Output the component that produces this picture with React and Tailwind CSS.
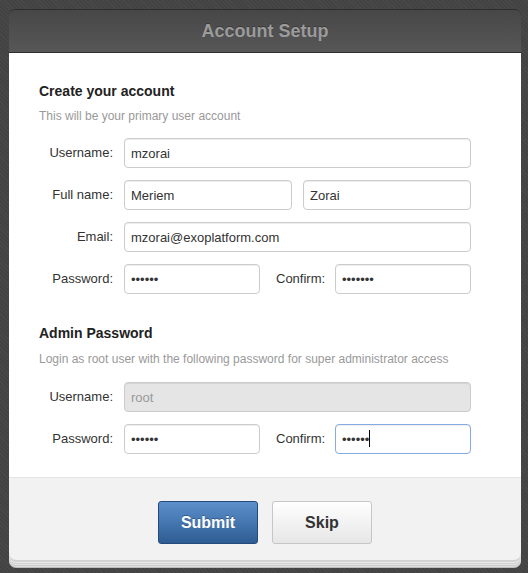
import { useState } from 'react'

const inputBase =
    'h-[30px] rounded-[4px] border px-[6px] text-[13px] outline-none shadow-[inset_0_1px_1px_rgba(0,0,0,0.075)]'
const inputNormal = `${inputBase} border-[#cccccc] bg-white text-[#333]`

function Field({ label, children }) {
    return (
        <div className="flex items-center">
            <label className="w-[75px] shrink-0 pr-[1px] text-right text-[13px] text-[#333]">{label}</label>
            <div className="ml-[10px] flex items-center">{children}</div>
        </div>
    )
}

function App() {
    const [form] = useState({
        username: 'mzorai',
        first: 'Meriem',
        last: 'Zorai',
        email: 'mzorai@exoplatform.com',
        password: '123456',
        confirm: '1234567',
        adminPassword: '123456',
        adminConfirm: '123456',
    })

    return (
        <div className="min-h-screen bg-[repeating-linear-gradient(45deg,#494949_0px,#494949_1px,#434343_1px,#434343_3px)] pt-[9px] pl-[9px] pb-[5px] font-['Liberation_Sans',Arial,sans-serif]">
            <div className="w-[512px] rounded-b-[7px] shadow-[0_2px_0_#d2d2d2,0_3px_0_#ececec,0_4px_0_#cfcfcf,0_5px_0_#e6e6e6,0_6px_0_#cbcbcb,0_7px_0_#dedede,0_8px_0_#bdbdbd]">
                {/* header */}
                <div className="flex h-[44px] items-center justify-center rounded-t-[6px] border-t border-b border-[#2e2e2e] bg-gradient-to-b from-[#474747] to-[#575757]">
                    <h1 className="text-[18px] font-bold text-[#9b9b9b] [text-shadow:0_-1px_0_#3a3a3a]">Account Setup</h1>
                </div>

                {/* body */}
                <div className="bg-white pl-[30px] pt-[28px] pb-[23px]">
                    <h2 className="h-[20px] text-[14px] leading-[20px] font-bold text-[#222]">Create your account</h2>
                    <p className="mt-[7px] h-[16px] text-[12px] leading-[16px] text-[#999]">This will be your primary user account</p>

                    <div className="mt-[14px] flex flex-col gap-[12px]">
                        <Field label="Username:">
                            <input className={`${inputNormal} w-[347px]`} defaultValue={form.username} />
                        </Field>
                        <Field label="Full name:">
                            <input className={`${inputNormal} w-[168px]`} defaultValue={form.first} />
                            <input className={`${inputNormal} ml-[11px] w-[168px]`} defaultValue={form.last} />
                        </Field>
                        <Field label="Email:">
                            <input className={`${inputNormal} w-[347px]`} defaultValue={form.email} />
                        </Field>
                        <Field label="Password:">
                            <input type="password" className={`${inputNormal} w-[136px]`} defaultValue={form.password} />
                            <span className="ml-[16px] w-[48px] text-[13px] text-[#333]">Confirm:</span>
                            <input type="password" className={`${inputNormal} ml-[11px] w-[136px]`} defaultValue={form.confirm} />
                        </Field>
                    </div>

                    <h2 className="mt-[29px] h-[20px] text-[14px] leading-[20px] font-bold text-[#222]">Admin Password</h2>
                    <p className="mt-[8px] h-[16px] text-[12px] leading-[16px] text-[#999]">
                        Login as root user with the following password for super administrator access
                    </p>

                    <div className="mt-[15px] flex flex-col gap-[12px]">
                        <Field label="Username:">
                            <input
                                disabled
                                className={`${inputBase} w-[347px] border-[#cccccc] bg-[#e5e5e5] text-[#999] opacity-100`}
                                defaultValue="root"
                            />
                        </Field>
                        <Field label="Password:">
                            <input type="password" className={`${inputNormal} w-[136px]`} defaultValue={form.adminPassword} />
                            <span className="ml-[16px] w-[48px] text-[13px] text-[#333]">Confirm:</span>
                            <div className="relative ml-[11px]">
                                <input
                                    type="password"
                                    className={`${inputBase} w-[136px] border-[#86aae2] bg-white text-[#333] shadow-[inset_0_1px_1px_rgba(0,0,0,0.075),0_0_6px_rgba(82,140,220,0.6)]`}
                                    defaultValue={form.adminConfirm}
                                />
                                <span className="absolute left-[34px] top-[6px] h-[17px] w-px bg-black" />
                            </div>
                        </Field>
                    </div>
                </div>

                {/* footer */}
                <div className="flex h-[83px] justify-center gap-[14px] rounded-b-[7px] border-t border-[#e4e4e4] bg-[#f2f2f2] pt-[23px]">
                    <button className="h-[43px] w-[100px] rounded-[3px] border border-[#234a78] bg-gradient-to-b from-[#5c90cc] to-[#2e5d93] text-[16px] font-bold text-white [text-shadow:0_-1px_0_rgba(0,0,0,0.3)]">
                        Submit
                    </button>
                    <button className="h-[43px] w-[100px] rounded-[3px] border border-[#c6c6c6] bg-gradient-to-b from-white to-[#e6e6e6] text-[16px] font-bold text-[#333]">
                        Skip
                    </button>
                </div>
            </div>
        </div>
    )
}

export default App
